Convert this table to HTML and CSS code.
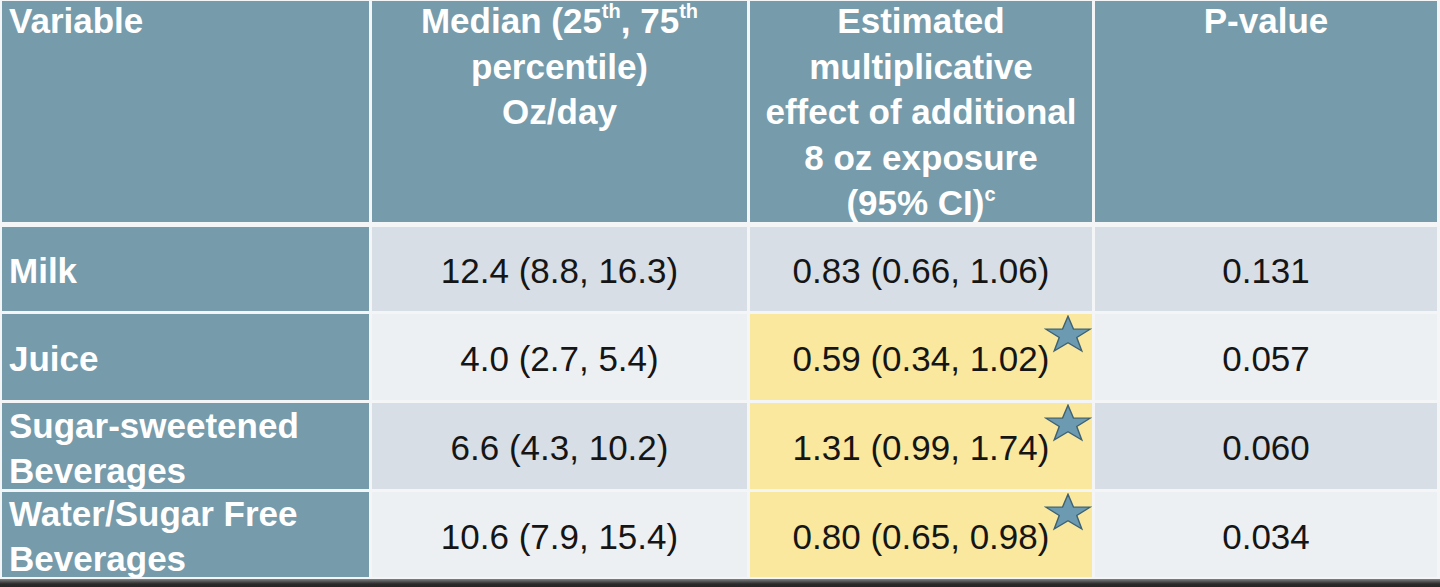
FILE: index.html
```html
<!DOCTYPE html>
<html lang="en">
<head>
<meta charset="utf-8">
<title>Beverage exposure table</title>
<link rel="stylesheet" href="styles.css">
</head>
<body>
<div class="table" role="table">
  <div class="cell head head-left" role="columnheader"><p class="head-text">Variable</p></div>
  <div class="cell head" role="columnheader"><p class="head-text">Median (25<sup>th</sup>, 75<sup>th</sup><br>percentile)<br>Oz/day</p></div>
  <div class="cell head" role="columnheader"><p class="head-text">Estimated<br>multiplicative<br>effect of additional<br>8 oz exposure<br>(95% CI)<sup class="sup-c">c</sup></p></div>
  <div class="cell head" role="columnheader"><p class="head-text">P-value</p></div>

  <div class="cell label" role="rowheader">Milk</div>
  <div class="cell val dark">12.4 (8.8, 16.3)</div>
  <div class="cell val dark">0.83 (0.66, 1.06)</div>
  <div class="cell val dark">0.131</div>

  <div class="cell label" role="rowheader">Juice</div>
  <div class="cell val light">4.0 (2.7, 5.4)</div>
  <div class="cell val hi">0.59 (0.34, 1.02)<svg class="star" viewBox="0 0 100 95" preserveAspectRatio="none"><polygon points="50,3 61.5,35.5 96,35.5 68.2,56 78.8,90 50,69.5 21.2,90 31.8,56 4,35.5 38.5,35.5"/></svg></div>
  <div class="cell val light">0.057</div>

  <div class="cell label" role="rowheader">Sugar-sweetened<br>Beverages</div>
  <div class="cell val dark">6.6 (4.3, 10.2)</div>
  <div class="cell val hi">1.31 (0.99, 1.74)<svg class="star" viewBox="0 0 100 95" preserveAspectRatio="none"><polygon points="50,3 61.5,35.5 96,35.5 68.2,56 78.8,90 50,69.5 21.2,90 31.8,56 4,35.5 38.5,35.5"/></svg></div>
  <div class="cell val dark">0.060</div>

  <div class="cell label" role="rowheader">Water/Sugar Free<br>Beverages</div>
  <div class="cell val light">10.6 (7.9, 15.4)</div>
  <div class="cell val hi">0.80 (0.65, 0.98)<svg class="star" viewBox="0 0 100 95" preserveAspectRatio="none"><polygon points="50,3 61.5,35.5 96,35.5 68.2,56 78.8,90 50,69.5 21.2,90 31.8,56 4,35.5 38.5,35.5"/></svg></div>
  <div class="cell val light">0.034</div>
</div>
</body>
</html>
```
FILE: styles.css
```css
html, body {
  margin: 0;
  padding: 0;
}

body {
  width: 1440px;
  height: 587px;
  overflow: hidden;
  font-family: "Liberation Sans", Arial, sans-serif;
  background: linear-gradient(to bottom, #f2f4f6 0, #f2f4f6 578px, #9a9fa3 578px, #6b6e70 580px, #4a4a4a 582px, #2a2a2a 584px, #262626 587px);
}

.table {
  display: grid;
  grid-template-columns: 367px 375px 342px 342px;
  grid-template-rows: 223px 84px 86px 86px 85px;
  gap: 3px;
  padding: 1px 3px 2px 2px;
  background: #f3f5f7;
}

.cell {
  position: relative;
  box-sizing: border-box;
  overflow: visible;
}

.head {
  background: #769bab;
  color: #ffffff;
  font-weight: bold;
  font-size: 35px;
  line-height: 45.5px;
  text-align: center;
  margin-bottom: 2px;
}

.head-left {
  text-align: left;
  padding-left: 7px;
}

.head-text {
  margin: -3px 0 0;
}

.head sup {
  font-size: 20px;
  line-height: 0;
  vertical-align: 15px;
}

.head .sup-c {
  font-size: 20px;
  vertical-align: 14px;
}

.label {
  background: #769bab;
  color: #ffffff;
  font-weight: bold;
  font-size: 35px;
  line-height: 45px;
  display: flex;
  align-items: center;
  padding: 3px 0 0 7px;
}

.val {
  display: flex;
  align-items: center;
  justify-content: center;
  font-size: 35px;
  line-height: 45px;
  color: #151515;
  padding-top: 3px;
}

.dark {
  background: #d7dee5;
}

.light {
  background: #edf0f3;
}

.hi {
  background: #f9e89d;
}

.star {
  position: absolute;
  top: 1px;
  right: 0;
  width: 48px;
  height: 38px;
  fill: #6c9ab0;
  stroke: #3e6274;
  stroke-width: 3;
  stroke-linejoin: miter;
}
```
